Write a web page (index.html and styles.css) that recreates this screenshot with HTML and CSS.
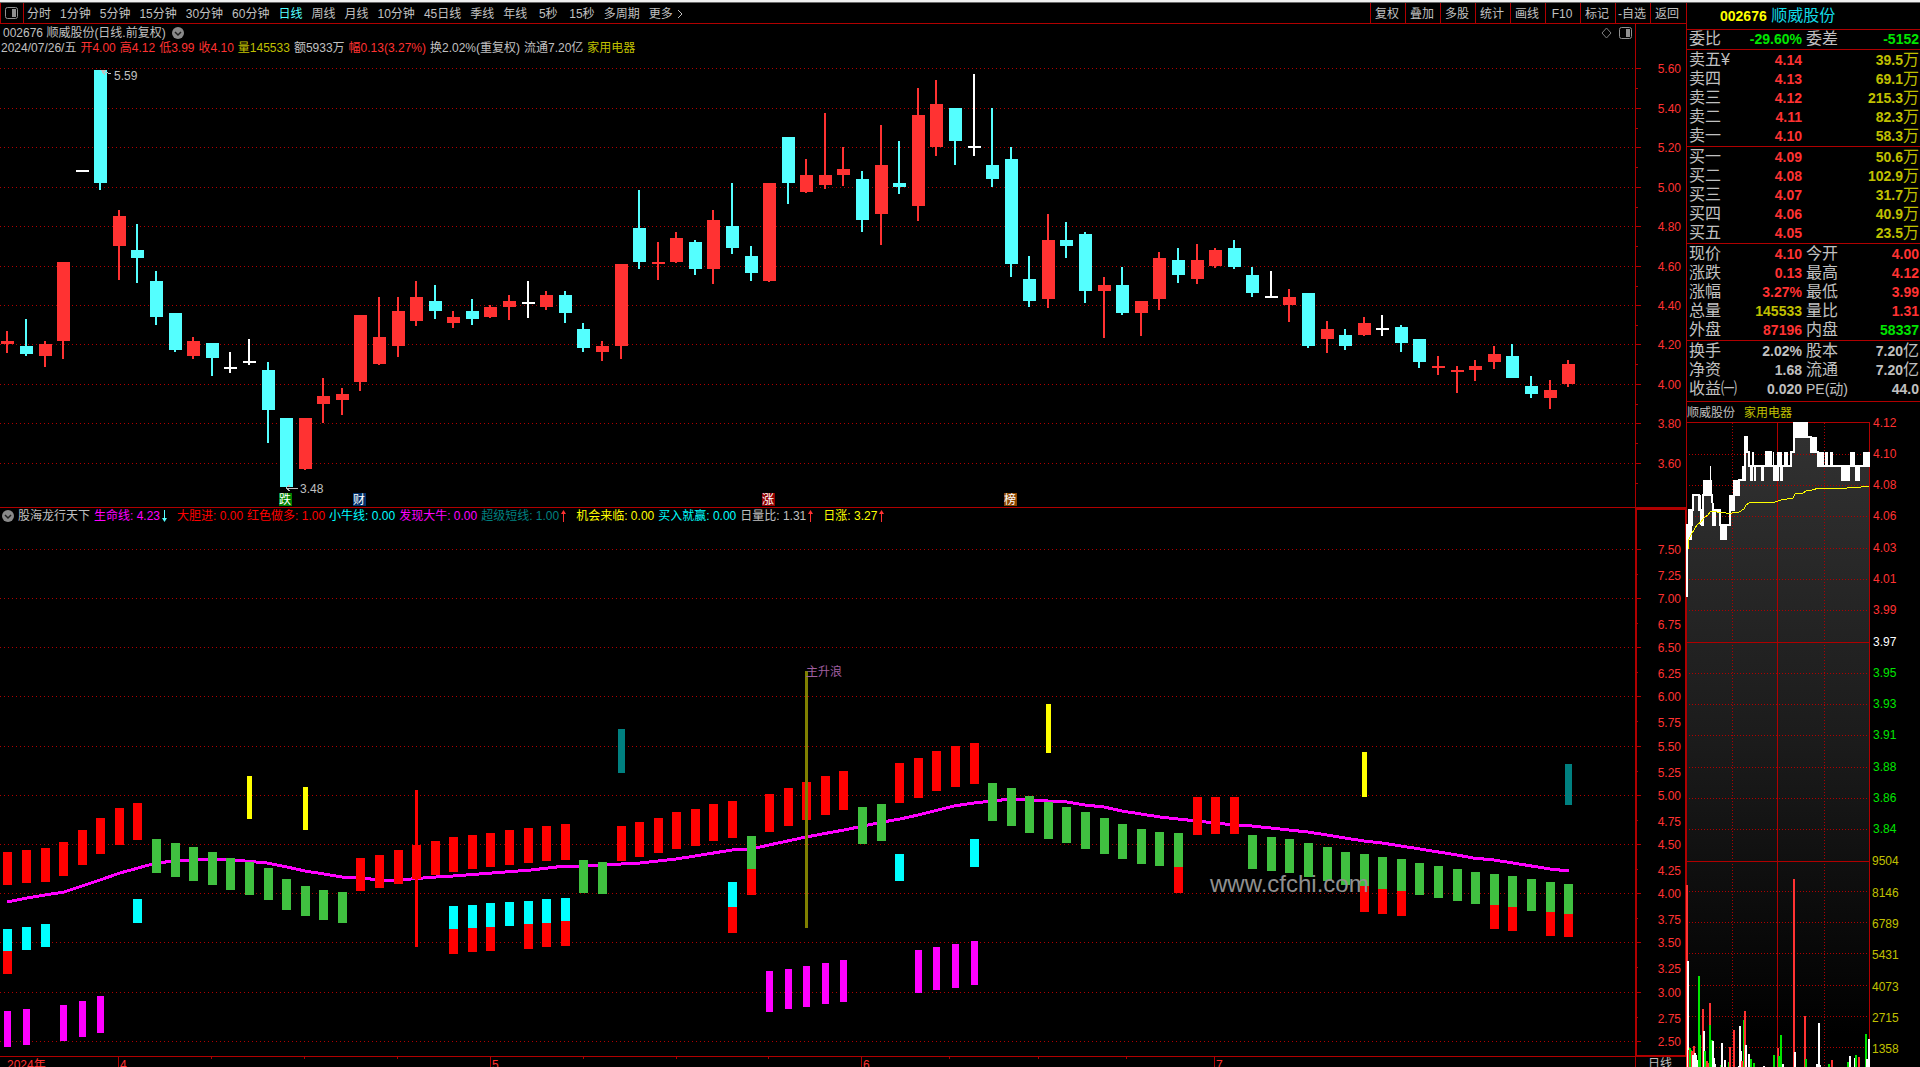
FILE: index.html
```html
<!DOCTYPE html>
<html lang="zh-CN">
<head>
<meta charset="utf-8">
<title>002676 顺威股份 - 日线</title>
<link rel="stylesheet" href="styles.css">
</head>
<body>
<div class="strip"></div>
<div class="layout">
  <main class="main">
    <nav class="toolbar">
      <button class="toggle" aria-label="侧栏"><svg width="13" height="12" viewBox="0 0 13 12"><rect x="0.5" y="0.5" width="12" height="11" rx="2" fill="none" stroke="#909090"/><rect x="7" y="2" width="4" height="8" fill="#909090"/></svg></button>
      <div class="periods">
        <button>分时</button><button>1分钟</button><button>5分钟</button><button>15分钟</button><button>30分钟</button><button>60分钟</button><button class="active">日线</button><button>周线</button><button>月线</button><button>10分钟</button><button>45日线</button><button>季线</button><button>年线</button><button>5秒</button><button>15秒</button><button>多周期</button><button class="more">更多<svg width="6" height="10" viewBox="0 0 6 10"><path d="M1 1 L5 5 L1 9" fill="none" stroke="#c0c0c0"/></svg></button>
      </div>
      <div class="tools">
        <button>复权</button><button>叠加</button><button>多股</button><button>统计</button><button>画线</button><button>F10</button><button>标记</button><button>-自选</button><button>返回</button>
      </div>
    </nav>

    <section class="panel price">
      <div class="body">
        <header class="title-row">
          <span>002676 顺威股份(日线.前复权)</span>
          <svg class="chev" width="12" height="12" viewBox="0 0 12 12"><circle cx="6" cy="6" r="6" fill="#8a8a8a"/><path d="M3 5 L6 8 L9 5" fill="none" stroke="#202020" stroke-width="1.5"/></svg>
          <span class="corner">
            <svg width="11" height="12" viewBox="0 0 11 12"><path d="M5.5 1 L10 6 L5.5 11 L1 6 Z" fill="none" stroke="#808080"/></svg>
            <svg width="13" height="12" viewBox="0 0 13 12"><rect x="0.5" y="0.5" width="12" height="11" rx="2" fill="none" stroke="#909090"/><rect x="7" y="2" width="4" height="8" fill="#909090"/></svg>
          </span>
        </header>
        <div class="ohlc">
          <span>2024/07/26/五</span><span class="red">开4.00</span><span class="red">高4.12</span><span class="red">低3.99</span><span class="red">收4.10</span><span class="gold">量145533</span><span>额5933万</span><span class="red">幅0.13(3.27%)</span><span>换2.02%(重复权)</span><span>流通7.20亿</span><span class="gold">家用电器</span>
        </div>
        <svg class="plot" id="price-plot"></svg>
      </div>
      <svg class="axis" id="price-axis"></svg>
    </section>

    <section class="panel indicator">
      <div class="body">
        <header class="legend">
          <svg class="chev" width="12" height="12" viewBox="0 0 12 12"><circle cx="6" cy="6" r="6" fill="#8a8a8a"/><path d="M3 5 L6 8 L9 5" fill="none" stroke="#202020" stroke-width="1.5"/></svg>
          <span class="name">股海龙行天下</span>
          <span class="magenta">生命线: 4.23<svg class="arrow" width="5" height="12" viewBox="0 0 5 12"><path d="M2 0h1v8h2L2.500 12 0 8h2z" fill="#54ffff"/></svg></span>
          <span class="pure-red">大胆进: 0.00</span>
          <span class="pure-red">红色做多: 1.00</span>
          <span class="cyan">小牛线: 0.00</span>
          <span class="magenta">发现大牛: 0.00</span>
          <span class="teal">超级短线: 1.00<svg class="arrow" width="5" height="12" viewBox="0 0 5 12"><path d="M2 12h1V4h2L2.500 0 0 4h2z" fill="#ff3232"/></svg></span>
          <span class="yellow">机会来临: 0.00</span>
          <span class="cyan">买入就赢: 0.00</span>
          <span>日量比: 1.31<svg class="arrow" width="5" height="12" viewBox="0 0 5 12"><path d="M2 12h1V4h2L2.500 0 0 4h2z" fill="#ff3232"/></svg></span>
          <span class="yellow">日涨: 3.27<svg class="arrow" width="5" height="12" viewBox="0 0 5 12"><path d="M2 12h1V4h2L2.500 0 0 4h2z" fill="#ff3232"/></svg></span>
        </header>
        <svg class="plot" id="ind-plot"></svg>
      </div>
      <svg class="axis" id="ind-axis"></svg>
    </section>

    <footer class="dates">
      <svg id="date-axis"></svg>
      <span class="period">日线</span>
    </footer>
  </main>

  <aside class="quote">
    <h1><b>002676</b> 顺威股份</h1>
    <table class="ratio"><tr><th>委比</th><td class="green">-29.60%</td><th>委差</th><td class="green">-5152</td></tr></table>
    <table>
      <tr><th>卖五<i>¥</i></th><td class="red">4.14</td><th></th><td class="gold">39.5<i>万</i></td></tr>
      <tr><th>卖四</th><td class="red">4.13</td><th></th><td class="gold">69.1<i>万</i></td></tr>
      <tr><th>卖三</th><td class="red">4.12</td><th></th><td class="gold">215.3<i>万</i></td></tr>
      <tr><th>卖二</th><td class="red">4.11</td><th></th><td class="gold">82.3<i>万</i></td></tr>
      <tr><th>卖一</th><td class="red">4.10</td><th></th><td class="gold">58.3<i>万</i></td></tr>
    </table>
    <table>
      <tr><th>买一</th><td class="red">4.09</td><th></th><td class="gold">50.6<i>万</i></td></tr>
      <tr><th>买二</th><td class="red">4.08</td><th></th><td class="gold">102.9<i>万</i></td></tr>
      <tr><th>买三</th><td class="red">4.07</td><th></th><td class="gold">31.7<i>万</i></td></tr>
      <tr><th>买四</th><td class="red">4.06</td><th></th><td class="gold">40.9<i>万</i></td></tr>
      <tr><th>买五</th><td class="red">4.05</td><th></th><td class="gold">23.5<i>万</i></td></tr>
    </table>
    <table>
      <tr><th>现价</th><td class="red">4.10</td><th>今开</th><td class="red">4.00</td></tr>
      <tr><th>涨跌</th><td class="red">0.13</td><th>最高</th><td class="red">4.12</td></tr>
      <tr><th>涨幅</th><td class="red">3.27%</td><th>最低</th><td class="red">3.99</td></tr>
      <tr><th>总量</th><td class="gold">145533</td><th>量比</th><td class="red">1.31</td></tr>
      <tr><th>外盘</th><td class="red">87196</td><th>内盘</th><td class="green">58337</td></tr>
    </table>
    <table class="basics">
      <tr><th>换手</th><td>2.02%</td><th>股本</th><td>7.20<i>亿</i></td></tr>
      <tr><th>净资</th><td>1.68</td><th>流通</th><td>7.20<i>亿</i></td></tr>
      <tr><th>收益㈠</th><td>0.020</td><th class="pe">PE(动)</th><td>44.0</td></tr>
    </table>
    <div class="tabs"><a href="#stock">顺威股份</a><a href="#sector" class="gold">家用电器</a></div>
    <svg class="minute" id="minute"></svg>
  </aside>
</div>
<script src="chart.js"></script>
</body>
</html>
```
FILE: styles.css
```css
* { box-sizing: border-box; }
html, body { margin: 0; height: 100%; overflow: hidden; background: #000; }
body {
  display: flex; flex-direction: column;
  font: 12px/14px "Liberation Sans", "Noto Sans CJK SC", sans-serif;
  color: #c0c0c0;
}
button { background: none; border: 0; margin: 0; padding: 0; font: inherit; color: inherit; white-space: nowrap; }
svg { display: block; }

.red { color: #ff3232; }
.pure-red { color: #f00; }
.gold { color: #c0c000; }
.green { color: #00e600; }
.magenta { color: #f0f; }
.cyan { color: #0ff; }
.teal { color: #008080; }
.yellow { color: #ff0; }

.strip { flex: none; height: 3px; background: #f0f0f0; border-bottom: 1px solid #6a6a6a; }
.layout { flex: 1; min-height: 0; display: grid; grid-template-columns: minmax(0, 1fr) 234px; }
.main { min-height: 0; display: flex; flex-direction: column; }

.toolbar { flex: none; height: 21px; display: flex; border-bottom: 1px solid #b00000; }
.toggle { width: 24px; padding-left: 4px; border: solid #b00000; border-width: 0 1px; }
.periods { flex: 1; display: flex; gap: 9px; padding: 1px 0 0 3px; }
.periods button { min-width: 24px; }
.active { color: #54ffff; }
.more { display: flex; align-items: center; gap: 4px; }
.tools { display: flex; padding-right: 1px; }
.tools button { width: 35px; padding: 1px 2px 0 0; border-left: 1px solid #b00000; }

.panel { display: grid; grid-template-columns: minmax(0, 1fr) 51px; min-height: 0; }
.price { flex: 483 1 0; }
.indicator { flex: 549 1 0; border-top: 1px solid #b00000; }
.body { display: flex; flex-direction: column; min-height: 0; min-width: 0; }
.plot { flex: 1; width: 100%; height: 0; min-height: 0; }
.axis { width: 51px; height: 100%; }
.title-row { height: 17px; display: flex; align-items: center; gap: 6px; padding: 1px 3px 0; }
.corner { margin-left: auto; display: flex; gap: 7px; }
.ohlc { height: 13px; display: flex; align-items: center; gap: 4px; padding-left: 1px; white-space: nowrap; }
.legend { height: 16px; display: flex; align-items: center; gap: 4px; padding: 1px 0 0 2px; white-space: nowrap; }
.arrow { display: inline-block; margin: 0 6px 0 2px; vertical-align: -2px; }

.dates { flex: none; height: 11px; display: grid; grid-template-columns: minmax(0, 1fr) 51px; border-top: 1px solid #b00000; overflow: hidden; }
.dates svg { width: 100%; height: 10px; }
.period { border-left: 1px solid #b00000; padding-left: 12px; }

.quote { display: flex; flex-direction: column; min-height: 0; border-left: 1px solid #b00000; }
.quote h1 {
  height: 27px; margin: 0; border-bottom: 1px solid #b00000;
  padding-left: 33px; font-size: 16px; font-weight: 400; line-height: 26px; color: #12dbe6;
}
.quote h1 b { font-size: 14px; color: #ff0; }
.quote table { width: 100%; table-layout: fixed; border-collapse: separate; border-spacing: 0; padding-top: 1px; border-bottom: 1px solid #b00000; }
.quote .ratio { padding-top: 0; }
.quote .basics { padding-bottom: 2px; }
.quote tr { height: 19px; }
.quote th, .quote td { padding: 0 0 2px; line-height: 16px; white-space: nowrap; }
.quote th { width: 48px; padding-left: 2px; text-align: left; font-size: 16px; font-weight: 400; }
.quote th:nth-child(3) { width: 46px; padding-left: 4px; }
.quote td { width: 67px; text-align: right; font-size: 14px; font-weight: 700; }
.quote td:last-child { width: 72px; padding-right: 1px; }
.quote i { font-style: normal; font-weight: 400; font-size: 16px; }
.quote .pe { font-size: 14px; }
.tabs { height: 20px; display: flex; align-items: center; gap: 9px; padding: 1px 0 0; }
.tabs a { color: #c0c0c0; text-decoration: none; }
.tabs a.gold { color: #c0c000; }
.minute { flex: 1; width: 100%; height: 0; min-height: 0; overflow: visible; }

svg text { font-size: 12px; }
svg .watermark { font-size: 24px; }
```
FILE: chart.js
```js
const NS = 'http://www.w3.org/2000/svg';
const RED = '#ff3232', CYAN = '#54ffff', WHITE = '#ffffff', LINE = '#b00000';

// Makes a drawing surface whose design area (x0, y0, w, h) is spread over the element.
function surface(id, x0, y0, w, h) {
  const svg = document.getElementById(id);
  const box = svg.getBoundingClientRect();
  svg.replaceChildren();
  const kx = box.width / w, ky = box.height / h;
  const X = x => Math.round((x - x0) * kx), Y = y => Math.round((y - y0) * ky);
  const add = (tag, attrs, text) => {
    const n = document.createElementNS(NS, tag);
    for (const k in attrs) n.setAttribute(k, attrs[k]);
    if (text !== undefined) n.textContent = text;
    svg.appendChild(n);
    return n;
  };
  return {
    X, Y, add, width: box.width, height: box.height,
    rect(x, y1, wd, y2, fill) { add('rect', { x: X(x), y: Y(y1), width: wd, height: Math.max(1, Y(y2) - Y(y1)), fill }); },
    hline(x1, x2, y, dash) {
      add('line', { x1: X(x1), x2: X(x2), y1: Y(y) + 0.5, y2: Y(y) + 0.5, stroke: LINE, 'stroke-dasharray': dash || 'none', 'shape-rendering': 'crispEdges' });
    },
    vline(x, y1, y2, dash) {
      add('line', { x1: X(x) + 0.5, x2: X(x) + 0.5, y1: Y(y1), y2: Y(y2), stroke: LINE, 'stroke-dasharray': dash || 'none', 'shape-rendering': 'crispEdges' });
    },
    text(x, y, s, fill, extra) { add('text', Object.assign({ x: X(x), y: Y(y) + 5, fill }, extra), s); },
    path(points, color, width) {
      add('polyline', { points: points.map(p => X(p[0]) + ',' + Y(p[1])).join(' '), fill: 'none', stroke: color, 'stroke-width': width, 'shape-rendering': 'crispEdges' });
    }
  };
}

const center = i => Math.floor(7.9 + 18.58 * i);

// [colour, body top, body bottom, wick top, wick bottom]
const candles = [
  ['r',341,344,331,353],['c',346,354,319,356],['r',344,356,341,367],['r',262,341,262,359],['w',170,172,170,172],
  ['c',70,183,70,190],['r',216,246,210,280],['c',250,258,224,283],['c',281,317,271,325],['c',313,350,313,352],
  ['r',341,356,337,359],['c',343,358,343,376],['w',367,369,352,373],['w',361,363,339,365],['c',370,410,362,443],
  ['c',418,487,418,487],['r',418,469,418,470],['r',396,404,378,423],['r',394,400,388,415],['r',315,382,315,391],
  ['r',337,364,297,365],['r',311,346,297,357],['r',297,321,281,326],['c',301,311,285,319],['r',317,323,311,328],
  ['c',311,319,299,325],['r',307,317,305,318],['r',301,307,295,320],['w',302,304,281,318],['r',295,307,291,310],
  ['c',295,313,291,323],['c',329,348,323,352],['r',346,352,341,361],['r',264,346,264,359],['c',228,262,190,269],
  ['r',262,264,242,280],['r',238,262,232,263],['c',242,269,240,275],['r',220,269,210,284],['c',226,248,183,254],
  ['c',256,273,246,281],['r',183,281,183,282],['c',137,183,137,204],['r',175,192,159,193],['r',175,185,113,189],
  ['r',169,175,147,186],['c',179,220,171,232],['r',165,214,125,245],['c',183,187,141,194],['r',115,206,88,221],
  ['r',104,147,80,156],['c',108,141,108,165],['w',146,148,74,156],['c',165,179,108,187],['c',159,264,147,277],
  ['c',279,301,256,307],['r',240,299,214,308],['c',240,246,222,258],['c',234,291,232,303],['r',285,291,277,338],
  ['c',285,313,267,315],['r',301,313,301,336],['r',258,299,252,310],['c',260,275,248,283],['r',260,279,244,284],
  ['r',250,266,248,268],['c',248,267,240,269],['c',275,293,267,297],['w',296,298,271,297],['r',297,305,289,322],
  ['c',293,346,293,348],['r',329,339,321,353],['c',335,346,329,350],['r',323,335,317,336],['w',328,330,315,336],
  ['c',327,343,325,352],['c',339,362,339,368],['r',366,368,356,375],['r',370,372,366,393],['r',366,370,360,381],
  ['r',354,362,346,369],['c',356,378,344,378],['c',386,394,376,398],['r',390,398,380,409],['r',364,384,360,387]
];

// [first column, [top, bottom], ...] runs of trend bars
const R = '#ff0000', G = '#40c040';
const trend = [
  [R,0,[852,885],[850,883],[848,882],[842,876],[830,865],[818,854],[808,845],[803,840]],
  [G,8,[839,873],[843,877],[847,881],[852,885],[858,890],[862,895],[868,900],[879,910],[886,916],[890,920],[892,923]],
  [R,19,[858,891],[855,888],[850,884],[845,879],[841,875],[837,872],[835,869],[833,867],[830,865],[828,863],[826,861],[824,860]],
  [G,31,[860,893],[862,894]],
  [R,33,[826,861],[822,857],[818,853],[812,849],[809,846],[804,841],[801,838]],
  [G,40,[836,869]],
  [R,41,[794,832],[788,826],[782,820],[776,815],[771,810]],
  [G,46,[807,844],[804,841]],
  [R,48,[763,803],[758,798],[751,791],[746,787],[743,784]],
  [G,53,[783,821],[788,826],[796,833],[802,839],[807,843],[812,849],[818,854],[824,859],[829,864],[832,866],[833,867]],
  [R,64,[797,835],[797,834],[797,834]],
  [G,67,[835,869],[837,871],[839,873],[843,877],[847,881],[852,885],[854,886],[857,889],[859,891],[863,895],[866,898],[869,901],[872,904],[874,905],[876,907],[879,911],[882,912],[884,914]]
];
const lowRed = [[0,951,974],[24,929,954],[25,928,952],[26,927,951],[28,924,949],[29,923,947],[30,921,946],[39,907,933],[40,869,895],[63,867,893],[73,886,912],[74,889,914],[75,891,916],[80,905,929],[81,907,931],[83,912,936],[84,914,937]];
const lowCyan = [[0,929,951],[1,927,950],[2,924,947],[7,899,923],[24,906,929],[25,905,928],[26,903,927],[27,902,926],[28,901,924],[29,899,923],[30,898,921],[39,882,907],[48,854,881],[52,839,867]];
const bulls = [[0,1011,1047],[1,1009,1045],[3,1005,1041],[4,1001,1037],[5,996,1033],[41,971,1012],[42,969,1009],[43,966,1007],[44,963,1004],[45,960,1002],[49,950,993],[50,947,990],[51,944,988],[52,941,985]];
const chances = [[13,776,819],[16,787,830],[56,704,753],[73,752,797]];
const shorts = [[33,729,773],[84,764,805]];
const life = [[7,902],[27,898],[45,895],[64,892],[82,886],[100,880],[120,873],[138,868],[156,863],[175,861],[194,860],[212,859],[245,861],[267,863],[287,867],[305,871],[324,874],[342,877],[361,878],[380,880],[398,880],[436,877],[453,876],[492,873],[531,870],[565,866],[584,866],[621,864],[640,863],[676,859],[695,856],[732,850],[751,849],[769,845],[806,837],[844,830],[863,826],[883,822],[900,819],[918,815],[954,806],[974,803],[992,801],[1011,799],[1029,800],[1067,802],[1085,805],[1104,807],[1122,811],[1141,814],[1160,817],[1178,819],[1197,821],[1234,825],[1252,826],[1289,830],[1308,832],[1327,835],[1345,838],[1364,841],[1382,843],[1420,849],[1457,855],[1473,858],[1494,860],[1513,863],[1550,869],[1569,871]];

const priceGrid = [68,108,147,187,226,266,305,344,384,423,463];
const indGrid = [549,598,647,696,746,795,844,893,942,992,1041];

function drawPrice() {
  const s = surface('price-plot', 0, 54, 1635, 453);
  priceGrid.forEach(y => s.hline(0, 1635, y, '1 3'));
  const tint = { r: RED, c: CYAN, w: WHITE };
  candles.forEach(([k, a, b, hi, lo], i) => {
    const c = center(i);
    s.rect(c - 1, hi, 2, lo, tint[k]);
    s.rect(c - 6, a, 13, b, tint[k]);
  });
  s.text(114, 75, '5.59', '#c0c0c0');
  s.path([[111,74],[102,71],[105,75]], '#c0c0c0', 1);
  s.path([[102,71],[106,70]], '#c0c0c0', 1);
  s.text(300, 488, '3.48', '#c0c0c0');
  s.path([[298,488],[286,488],[290,491]], '#c0c0c0', 1);
  s.path([[286,488],[290,485]], '#c0c0c0', 1);
  [[279,'跌','#008000'],[353,'财','#00306b'],[762,'涨','#900000'],[1004,'榜','#8b4500']].forEach(([x, t, f]) => {
    s.rect(x, 493, 13, 506, f);
    s.text(x, 499, t, WHITE);
  });

  const a = surface('price-axis', 1635, 24, 51, 483);
  a.vline(1635, 24, 507);
  priceGrid.forEach((y, n) => {
    a.hline(1636, 1641, y);
    a.hline(1636, 1638, y + 20);
    a.text(1681, y, (5.6 - n * 0.2).toFixed(2), RED, { 'text-anchor': 'end' });
  });
}

function drawIndicator() {
  const s = surface('ind-plot', 0, 524, 1635, 532);
  indGrid.forEach(y => s.hline(0, 1635, y, '1 3'));
  s.path(life, '#ff00ff', 3);
  trend.forEach(([color, first, ...bars]) => bars.forEach(([a, b], n) => s.rect(center(first + n) - 4, a, 9, b, color)));
  lowRed.forEach(([i, a, b]) => s.rect(center(i) - 4, a, 9, b, R));
  lowCyan.forEach(([i, a, b]) => s.rect(center(i) - 4, a, 9, b, '#00ffff'));
  bulls.forEach(([i, a, b]) => s.rect(center(i) - 3, a, 7, b, '#ff00ff'));
  chances.forEach(([i, a, b]) => s.rect(center(i) - 2, a, 5, b, '#ffff00'));
  shorts.forEach(([i, a, b]) => s.rect(center(i) - 3, a, 7, b, '#008080'));
  s.rect(415, 790, 3, 947, R);
  s.rect(805, 671, 3, 928, '#808000');
  s.text(806, 671, '主升浪', '#a05fa0');
  s.text(1210, 887, 'www.cfchi.com', '#909090', { class: 'watermark' });

  const a = surface('ind-axis', 1635, 508, 51, 548);
  a.rect(1635, 508, 2, 1056, LINE);
  a.rect(1685, 508, 1, 1056, LINE);
  a.rect(1635, 508, 51, 510, LINE);
  a.rect(1635, 1055, 51, 1056, LINE);
  indGrid.forEach((y, n) => {
    a.hline(1637, 1641, y);
    a.text(1681, y, (7.5 - n * 0.5).toFixed(2), RED, { 'text-anchor': 'end' });
    if (n < 10) {
      a.hline(1637, 1638, y + 25);
      a.text(1681, y + 26, (7.25 - n * 0.5).toFixed(2), RED, { 'text-anchor': 'end' });
    }
  });
}

function drawDates() {
  const s = surface('date-axis', 0, 1057, 1635, 10);
  s.text(7, 1064, '2024年', RED);
  [[118,'4'],[490,'5'],[861,'6'],[1214,'7']].forEach(([x, t]) => {
    s.vline(x, 1057, 1067);
    s.text(x + 2, 1064, t, RED);
  });
  [211,304,397,583,676,768,949,1038,1126].forEach(x => s.vline(x, 1057, 1059));
}

// Intraday price steps and the solid blocks where it flickers, in thirds of a pixel
const ticks = [[10,537],[10,320],[14,320],[14,275],[28,275],[28,231],[44,231],[44,275],[52,275],[52,318],[58,318],[58,231],[83,231],[86,275],[86,318],[88,275],[109,275],[109,320],[137,320],[137,275],[151,275],[151,231],[164,231],[164,187],[183,187],[183,57],[190,57],[190,101],[195,101],[195,145],[213,145],[245,145],[245,101],[252,101],[252,145],[267,145],[301,145],[320,145],[320,101],[329,101],[329,57],[381,57],[381,101],[403,101],[403,145],[538,145],[553,145],[553,101]];
const blocks = [[10,320,24,363],[12,275,27,320],[44,231,52,275],[50,275,59,320],[58,187,83,231],[77,145,80,187],[84,275,96,320],[98,272,109,278],[108,320,129,363],[135,231,151,275],[148,187,164,231],[175,145,183,187],[198,145,206,187],[204,101,211,145],[211,145,216,187],[231,145,239,187],[248,99,264,145],[267,101,271,187],[268,145,285,187],[280,101,293,145],[288,145,296,187],[300,101,312,145],[319,101,325,145],[327,13,371,57],[327,57,332,101],[381,57,398,101],[402,101,419,145],[424,101,432,145],[437,101,446,145],[471,145,497,187],[499,101,512,145],[513,145,527,187],[537,101,548,145],[552,101,557,145]];
const average = [[12,392],[14,363],[22,350],[30,335],[40,320],[50,311],[60,299],[72,292],[80,280],[100,281],[125,286],[145,286],[165,281],[180,274],[187,262],[195,256],[225,253],[272,252],[290,245],[328,241],[332,228],[358,225],[366,218],[385,217],[405,211],[490,210],[530,206],[555,205]];
const volumes = [['r',52,495],['w',54,723],['r',56,990],['g',60,984],['g',64,990],['r',67,993],['r',72,978],['w',68,1005],['w',75,999],['w',78,1005],['w',81,1020],['g',87,768],['g',91,945],['r',99,867],['w',102,933],['g',105,993],['r',110,1023],['r',114,1030],['r',120,849],['g',120,915],['g',126,960],['w',129,963],['w',132,1014],['w',136,1032],['g',152,1035],['w',156,969],['w',165,1020],['g',176,1025],['r',180,981],['r',192,930],['w',207,1038],['w',210,918],['w',213,993],['r',217,1023],['g',221,900],['r',225,873],['w',228,975],['w',237,1002],['g',243,1017],['g',252,1029],['w',282,1038],['g',312,1005],['r',324,984],['g',327,1008],['g',333,945],['w',339,1032],['r',372,477],['w',375,996],['r',405,888],['g',408,1017],['w',441,1032],['w',447,909],['w',450,1035],['g',477,1032],['r',486,1020],['g',534,1026],['w',540,1008],['w',555,1014],['g',558,1005],['r',567,1011],['g',588,942],['w',591,1017],['w',597,957]];

function drawMinute() {
  const s = surface('minute', 1687, 422, 233, 645);
  const at = ([x, y]) => [1684 + x / 3, 418 + y / 3];
  const defs = s.add('defs', {});
  defs.innerHTML = '<linearGradient id="shade" gradientUnits="userSpaceOnUse" x1="0" y1="0" x2="0" y2="' + s.height + '"><stop offset="0" stop-color="#323232"/><stop offset="0.5" stop-color="#1b1b1b"/><stop offset="0.95" stop-color="#000"/></linearGradient>';
  const outline = ticks.map(at);
  s.add('polygon', { fill: 'url(#shade)', points: [[1687, 1067], ...outline, [1869, 451], [1869, 1067]].map(p => s.X(p[0]) + ',' + s.Y(p[1])).join(' ') });
  [454,485,516,548,579,610,673,704,735,767,798,829,891,922,953,985,1016,1047].forEach(y => s.hline(1689, 1869, y, '1 2'));
  [1732,1824].forEach(x => s.vline(x, 423, 1067, '1 2'));
  [422,642,861].forEach(y => s.hline(1687, 1869, y));
  [1777,1869].forEach(x => s.vline(x, 422, 1067));
  s.path(outline, WHITE, 2);
  blocks.forEach(([x1, y1, x2, y2]) => {
    const p = at([x1, y1]), q = at([x2, y2]);
    s.rect(p[0], p[1], Math.max(1, s.X(q[0]) - s.X(p[0])), q[1] + 1, WHITE);
  });
  s.path(average.map(at), '#ffff00', 1);
  volumes.forEach(([k, x, y]) => s.rect(1669 + x / 3, 720 + y / 3, 2, 1067, { r: RED, g: '#00e600', w: WHITE }[k]));
  [['4.12',422],['4.10',453],['4.08',484],['4.06',515],['4.03',547],['4.01',578],['3.99',609],['3.97',641],['3.95',672],['3.93',703],['3.91',734],['3.88',766],['3.86',797],['3.84',828],['9504',860],['8146',892],['6789',923],['5431',954],['4073',986],['2715',1017],['1358',1048]].forEach(([t, y], n) => {
    s.text(n < 14 ? 1873 : 1872, y, t, n < 7 ? RED : n === 7 ? WHITE : n < 14 ? '#00e600' : '#c0c000');
  });
}

function draw() { drawPrice(); drawIndicator(); drawDates(); drawMinute(); }
draw();
window.addEventListener('resize', draw);
```
